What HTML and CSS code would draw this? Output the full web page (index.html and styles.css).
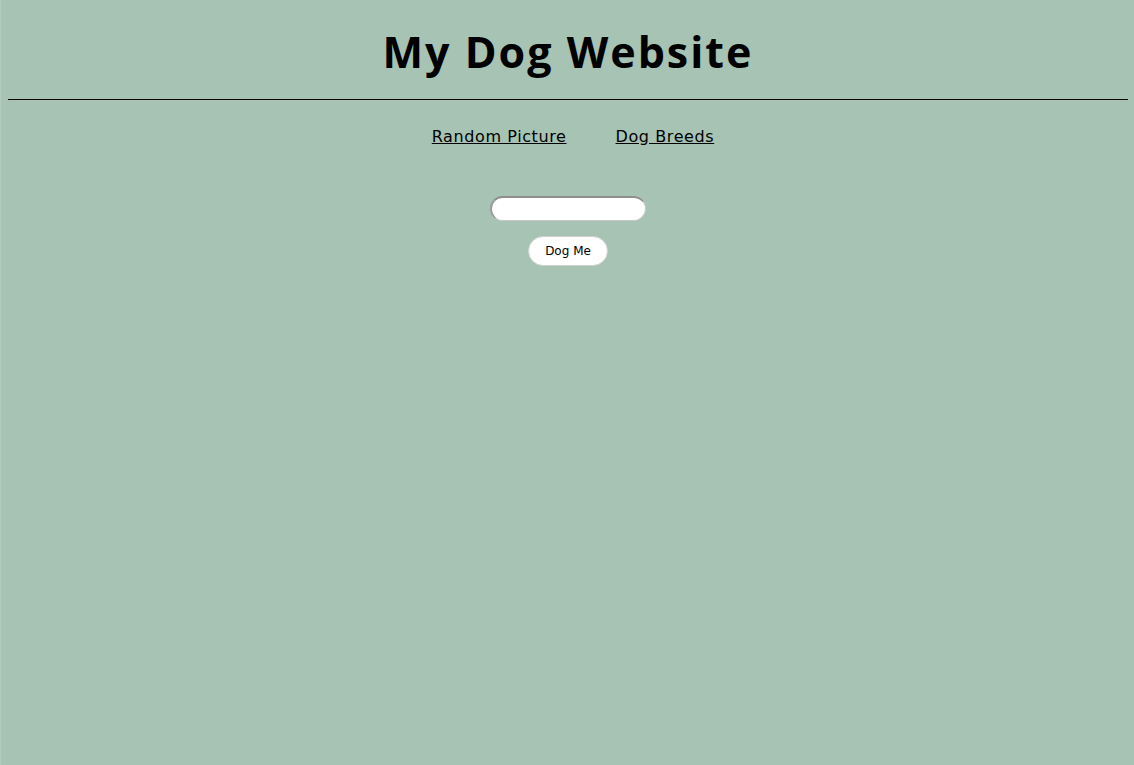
FILE: index.html
```html
<!DOCTYPE html>
<html>
<head>
<meta charset="utf-8">
<title>My Dog Website</title>
<link rel="stylesheet" href="styles.css">
</head>
<body>
<header class="site-header">
  <h1 class="title">My Dog Website</h1>
</header>
<hr class="divider">
<nav class="nav">
  <a class="nav-link" href="#">Random Picture</a>
  <a class="nav-link" href="#">Dog Breeds</a>
</nav>
<form class="dog-form">
  <input class="dog-input" type="text">
  <button class="dog-button" type="button">Dog Me</button>
</form>
</body>
</html>
```
FILE: styles.css
```css
html, body {
  height: 100%;
}
body {
  margin: 0;
  padding: 0 6px 0 7px;
  background: #a7c3b4;
  font-family: "DejaVu Sans", Verdana, sans-serif;
  color: #000;
  box-sizing: border-box;
  border-left: 1px solid #b4cbbf;
}
.site-header {
  display: flex;
  justify-content: center;
  padding-top: 27px;
}
.title {
  margin: 0;
  font-family: "Open Sans", "DejaVu Sans", sans-serif;
  font-size: 43px;
  font-weight: bold;
  letter-spacing: 2px;
  line-height: 50px;
}
.divider {
  margin: 22px 0 0;
  border: 0;
  border-top: 1px solid #000;
  height: 0;
}
.nav {
  display: flex;
  justify-content: center;
  gap: 49px;
  padding-top: 27px;
  padding-left: 10px;
}
.nav-link {
  color: #000;
  font-size: 16px;
  letter-spacing: 0.6px;
  text-decoration: underline;
  line-height: 20px;
}
.dog-form {
  display: flex;
  flex-direction: column;
  align-items: center;
  gap: 15px;
  padding-top: 49px;
}
.dog-input {
  width: 156px;
  height: 25px;
  box-sizing: border-box;
  border-radius: 13px;
  border: 1px solid #c8c8c8;
  border-top: 2px solid #8e8e8e;
  border-left: 2px solid #9a9a9a;
  background: #fff;
  padding: 0 8px;
  outline: none;
}
.dog-button {
  width: 80px;
  height: 30px;
  border-radius: 15px;
  border: 1px solid #d0d0d0;
  background: #fff;
  font-family: "DejaVu Sans", Verdana, sans-serif;
  font-size: 12px;
  color: #000;
  padding: 0;
}
```
